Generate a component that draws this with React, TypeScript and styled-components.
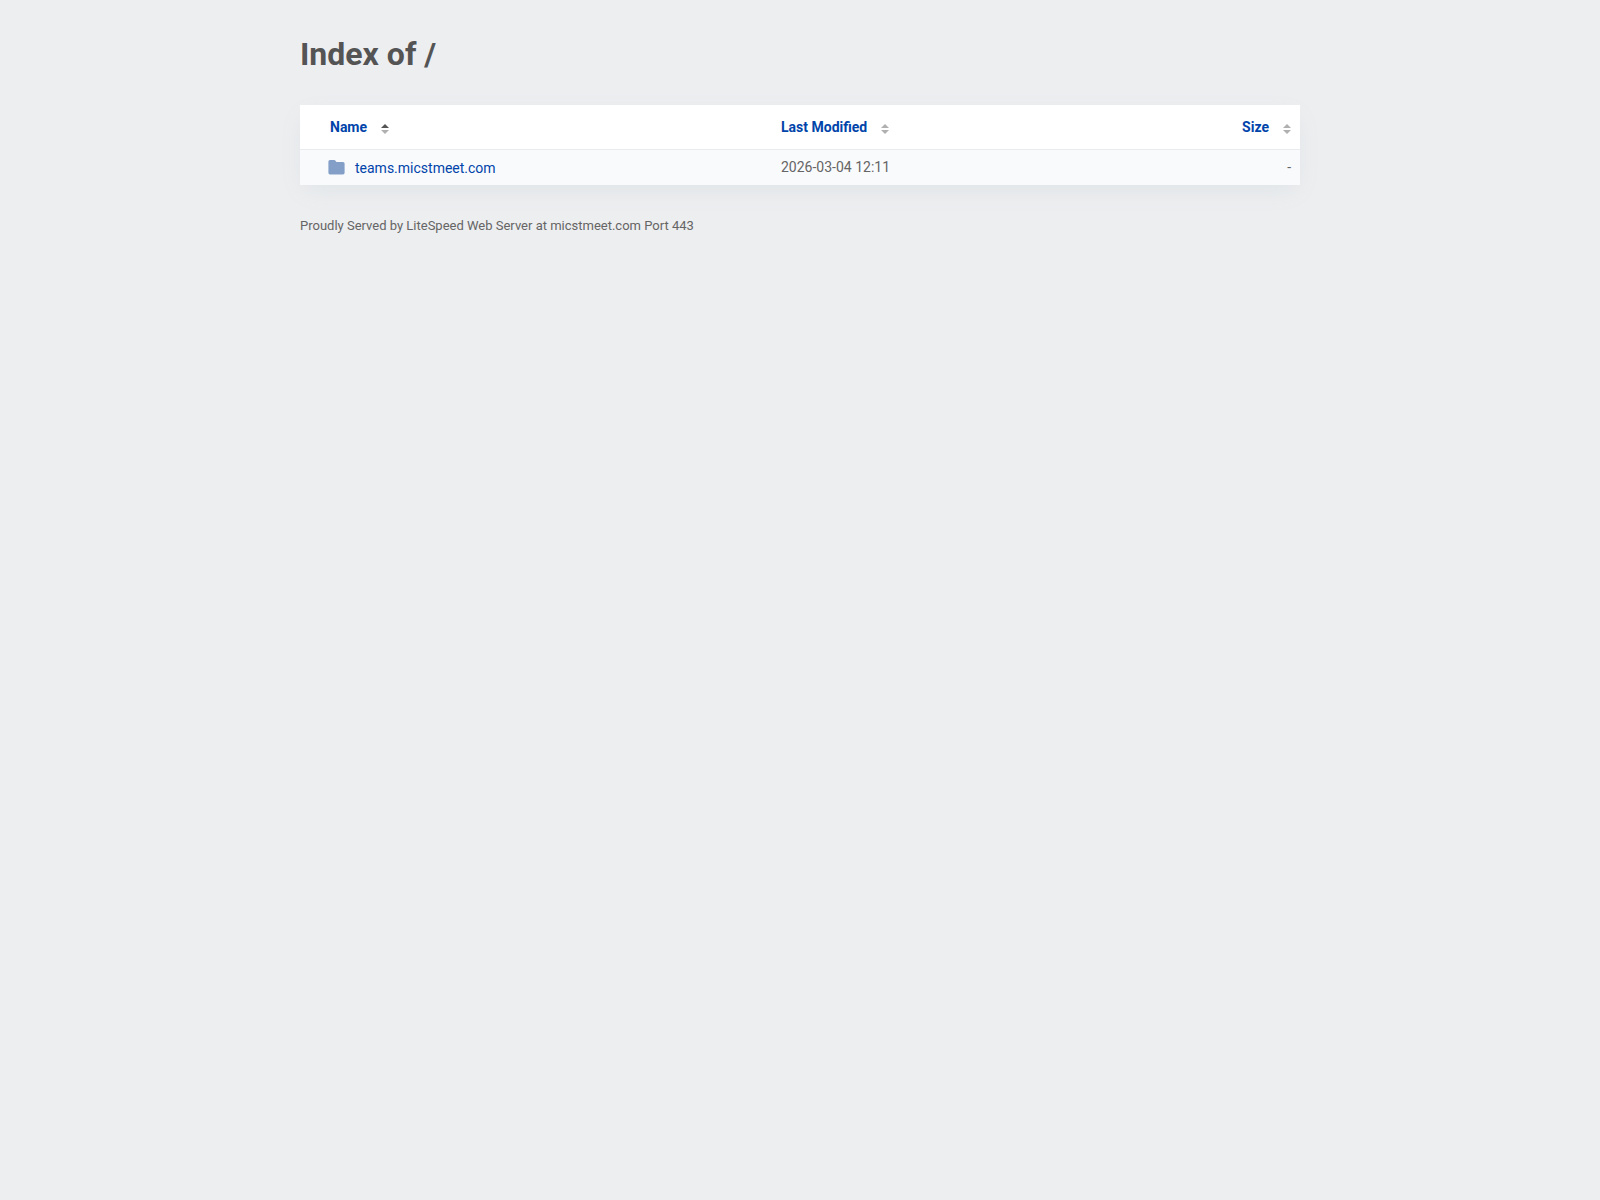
import React from "react";
import styled, { createGlobalStyle } from "styled-components";

const GlobalStyle = createGlobalStyle`
  *, *::before, *::after {
    box-sizing: border-box;
  }
  body {
    margin: 0;
    background: #edeef0;
    color: #656565;
    font-family: Roboto, "Liberation Sans", sans-serif;
    font-size: 14px;
    line-height: 20px;
  }
`;

const Page = styled.div`
  display: flex;
  flex-direction: column;
  max-width: 1040px;
  margin: 0 auto;
  padding: 32px 20px;
`;

const Title = styled.h1`
  margin: 0 0 28px;
  color: #545454;
  font-size: 32px;
  font-weight: 700;
  line-height: 45px;
`;

const Listing = styled.table`
  width: 100%;
  table-layout: fixed;
  border-collapse: separate;
  border-spacing: 0;
  background: #fff;
  box-shadow: 0 8px 24px -4px #dde3e5;
`;

type Align = "left" | "right";

const HeadCell = styled.th<{ $align?: Align; $width: string; $indent?: boolean }>`
  width: ${(p) => p.$width};
  height: 45px;
  padding: 0 9px 0 ${(p) => (p.$indent ? "30px" : "9px")};
  border-bottom: 1px solid #e8ecee;
  text-align: ${(p) => p.$align ?? "left"};
`;

const SortButton = styled.button`
  display: inline-flex;
  align-items: center;
  gap: 14px;
  padding: 0;
  border: 0;
  background: none;
  color: #0044aa;
  font: inherit;
  font-weight: 700;
  cursor: pointer;
`;

const SortIcon = styled.svg`
  width: 8px;
  height: 10px;
  margin-top: 3px;
`;

const Cell = styled.td<{ $align?: Align; $indent?: boolean }>`
  height: 35px;
  padding: ${(p) => (p.$indent ? "0 9px 0 28px" : "0 9px 2px")};
  background: #f9fafc;
  text-align: ${(p) => p.$align ?? "left"};
`;

const EntryLink = styled.a`
  display: flex;
  align-items: center;
  gap: 10px;
  color: #0044aa;
  text-decoration: none;
`;

const FolderIcon = styled.svg`
  width: 17px;
  height: 15px;
`;

const Footer = styled.footer`
  margin-top: 31px;
  font-size: 13px;
`;

function SortMark({ ascending }: { ascending?: boolean }) {
  return (
    <SortIcon viewBox="0 0 8 10" aria-hidden="true">
      <path d="M4 0L8 4H0z" fill={ascending ? "#545454" : "#b0b0b0"} />
      <path d="M0 6H8L4 10z" fill="#b0b0b0" />
    </SortIcon>
  );
}

const columns: { label: string; width: string; align?: Align; indent?: boolean; ascending?: boolean }[] = [
  { label: "Name", width: "47.2%", indent: true, ascending: true },
  { label: "Last Modified", width: "30%" },
  { label: "Size", width: "22.8%", align: "right" },
];

const entries = [{ name: "teams.micstmeet.com", modified: "2026-03-04 12:11", size: "-" }];

export default function App() {
  return (
    <>
      <GlobalStyle />
      <Page>
        <Title>Index of /</Title>
        <Listing>
          <thead>
            <tr>
              {columns.map((c) => (
                <HeadCell
                  key={c.label}
                  scope="col"
                  $width={c.width}
                  $align={c.align}
                  $indent={c.indent}
                  aria-sort={c.ascending ? "ascending" : "none"}
                >
                  <SortButton type="button">
                    {c.label}
                    <SortMark ascending={c.ascending} />
                  </SortButton>
                </HeadCell>
              ))}
            </tr>
          </thead>
          <tbody>
            {entries.map((e) => (
              <tr key={e.name}>
                <Cell $indent>
                  <EntryLink href={`/${e.name}/`}>
                    <FolderIcon viewBox="0 0 17 15" aria-hidden="true">
                      <path
                        d="M2 0H6.2Q7 0 7.5 .7L8.4 2H15Q16.6 2 16.6 3.6V12.8Q16.6 14.4 15 14.4H2Q.4 14.4 .4 12.8V1.6Q.4 0 2 0z"
                        fill="#839fc8"
                      />
                    </FolderIcon>
                    {e.name}
                  </EntryLink>
                </Cell>
                <Cell>{e.modified}</Cell>
                <Cell $align="right">{e.size}</Cell>
              </tr>
            ))}
          </tbody>
        </Listing>
        <Footer>Proudly Served by LiteSpeed Web Server at micstmeet.com Port 443</Footer>
      </Page>
    </>
  );
}
